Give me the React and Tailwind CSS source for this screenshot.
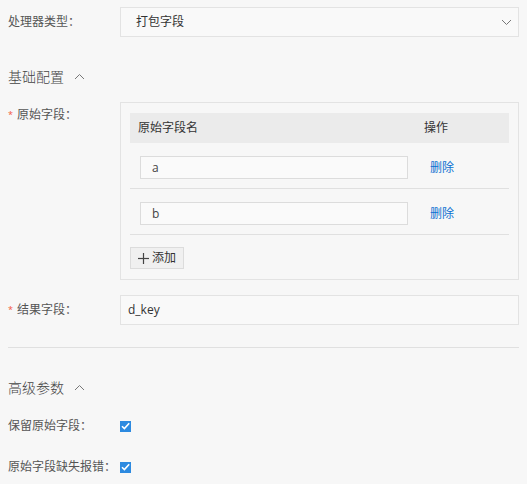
const FONT = { fontFamily: '"Open Sans", "Noto Sans CJK SC", sans-serif' };

function Chevron({ up }) {
  return (
    <svg width="11" height="7" viewBox="0 0 11 7" fill="none" stroke="#777" strokeWidth="1">
      {up ? <polyline points="1,6 5.5,1.5 10,6" /> : <polyline points="1,1 5.5,5.5 10,1" />}
    </svg>
  );
}

function Check() {
  return (
    <span className="flex h-[11px] w-[11px] items-center justify-center bg-[#2d8ae0]">
      <svg width="9" height="8" viewBox="0 0 9 8" fill="none" stroke="#fff" strokeWidth="1.6">
        <polyline points="1,4.2 3.4,6.6 8.2,1.2" />
      </svg>
    </span>
  );
}

function Label({ children, required }) {
  return (
    <div className="flex w-[112px] shrink-0 items-center text-[12px] leading-[18px] text-[#555]">
      {required && <span className="mr-[4px] text-[9px] text-[#f5563a]">*</span>}
      {children}
    </div>
  );
}

function Heading({ children, className }) {
  return (
    <div className={"flex h-[20px] items-center gap-[10px] text-[14px] font-light text-[#444] " + className}>
      <span>{children}</span>
      <Chevron up />
    </div>
  );
}

const rows = ['a', 'b'];

export default function App() {
  return (
    <div className="h-[484px] w-[527px] overflow-hidden bg-[#f7f7f7] px-[8px] pt-[7px]" style={FONT}>
      <div className="flex h-[30px] items-center">
        <Label>处理器类型：</Label>
        <div className="flex h-[30px] flex-1 items-center justify-between border border-[#e3e3e3] bg-[#f9f9f9] pl-[15px] pr-[6px] text-[12px] text-[#333]">
          <span>打包字段</span>
          <Chevron />
        </div>
      </div>

      <Heading className="mt-[29px]">基础配置</Heading>

      <div className="mt-[16px] flex">
        <div className="pt-[4px]">
          <Label required>原始字段：</Label>
        </div>
        <div className="flex-1 border border-[#e3e3e3] px-[9px] pt-[10px] pb-[10px]">
          <div className="flex h-[30px] items-center bg-[#ebebeb] text-[12px] text-[#333]">
            <div className="flex-1 pl-[8px]">原始字段名</div>
            <div className="w-[93px] pl-[8px]">操作</div>
          </div>
          {rows.map((v) => (
            <div key={v} className="flex h-[46px] items-start border-b border-[#e0e0e0] pt-[13px]">
              <div className="flex-1 pl-[10px] pr-[8px]">
                <div className="flex h-[23px] items-center border border-[#dcdcdc] bg-[#fafafa] pl-[11px] text-[12px] text-[#444]">
                  {v}
                </div>
              </div>
              <div className="flex h-[23px] w-[93px] items-center pl-[14px] text-[12px] text-[#0a6fd1]">删除</div>
            </div>
          ))}
          <button className="mt-[12px] flex h-[22px] w-[54px] items-center justify-center gap-[3px] border border-[#dcdcdc] bg-[#f0f0f0] text-[12px] text-[#333]">
            <svg width="11" height="11" viewBox="0 0 11 11" stroke="#444" strokeWidth="1.2">
              <line x1="5.5" y1="0" x2="5.5" y2="11" />
              <line x1="0" y1="5.5" x2="11" y2="5.5" />
            </svg>
            添加
          </button>
        </div>
      </div>

      <div className="mt-[15px] flex h-[30px] items-center">
        <Label required>结果字段：</Label>
        <div className="flex h-[30px] flex-1 items-center border border-[#e3e3e3] bg-[#f9f9f9] pl-[7px] text-[12px] text-[#333]">
          d_key
        </div>
      </div>

      <div className="mt-[22px] border-t border-[#e0e0e0]" />

      <Heading className="mt-[29px]">高级参数</Heading>

      <div className="mt-[19px] flex h-[20px] items-center">
        <Label>保留原始字段：</Label>
        <Check />
      </div>
      <div className="mt-[21px] flex h-[20px] items-center">
        <Label>原始字段缺失报错：</Label>
        <Check />
      </div>
    </div>
  );
}
